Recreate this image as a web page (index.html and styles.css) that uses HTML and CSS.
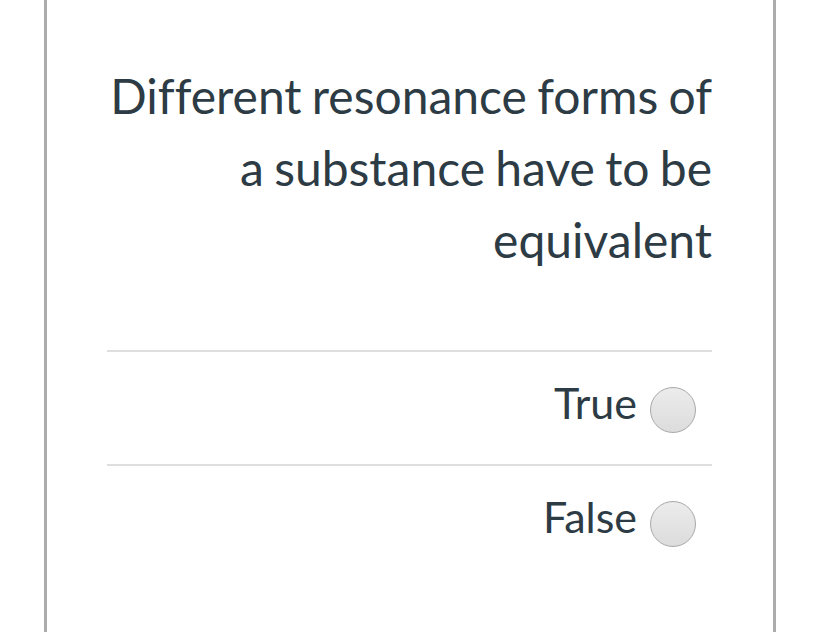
FILE: index.html
```html
<!DOCTYPE html>
<html lang="en">
  <head>
    <meta charset="UTF-8" />
    <meta name="viewport" content="width=device-width, initial-scale=1.0" />
    <title>Question</title>
    <link rel="stylesheet" href="styles.css">
  </head>
  <body>
    <!-- ========== QUESTION CARD ========== -->
    <div class="card">
      <p class="question">Different resonance forms of a substance have to be equivalent</p>

      <div class="answers">
        <label class="answer">
          <span class="answer-text">True</span>
          <span class="radio"></span>
        </label>
        <label class="answer">
          <span class="answer-text">False</span>
          <span class="radio"></span>
        </label>
      </div>
    </div>
  </body>
</html>
```

FILE: styles.css
```css
* {
  margin: 0;
  padding: 0;
  box-sizing: border-box;
  font-family: Lato, "Noto Sans", sans-serif;
  font-variant-ligatures: none;
}

body {
  background-color: #fff;
  color: #2d3b45;
  height: 632px;
  overflow: hidden;
}

.card {
  margin-left: 44px;
  width: 732px;
  height: 632px;
  border-left: 3px solid #acacac;
  border-right: 3px solid #acacac;
  padding: 60px 61px 0 60px;
}

.question {
  font-size: 48px;
  line-height: 72px;
  word-spacing: -2px;
  text-align: right;
  margin-left: -20px;
  margin-bottom: 74px;
}

.answer {
  display: flex;
  justify-content: flex-end;
  align-items: center;
  gap: 13px;
  border-top: 2px solid #dedede;
  padding: 35px 16px 31px 0;
}

.answer-text {
  font-size: 43px;
  line-height: 32px;
  margin-bottom: 14px;
}

.radio {
  width: 46px;
  height: 46px;
  border-radius: 50%;
  border: 1.5px solid #a8a8a8;
  background: linear-gradient(#ececec, #dcdcdc);
}
```
